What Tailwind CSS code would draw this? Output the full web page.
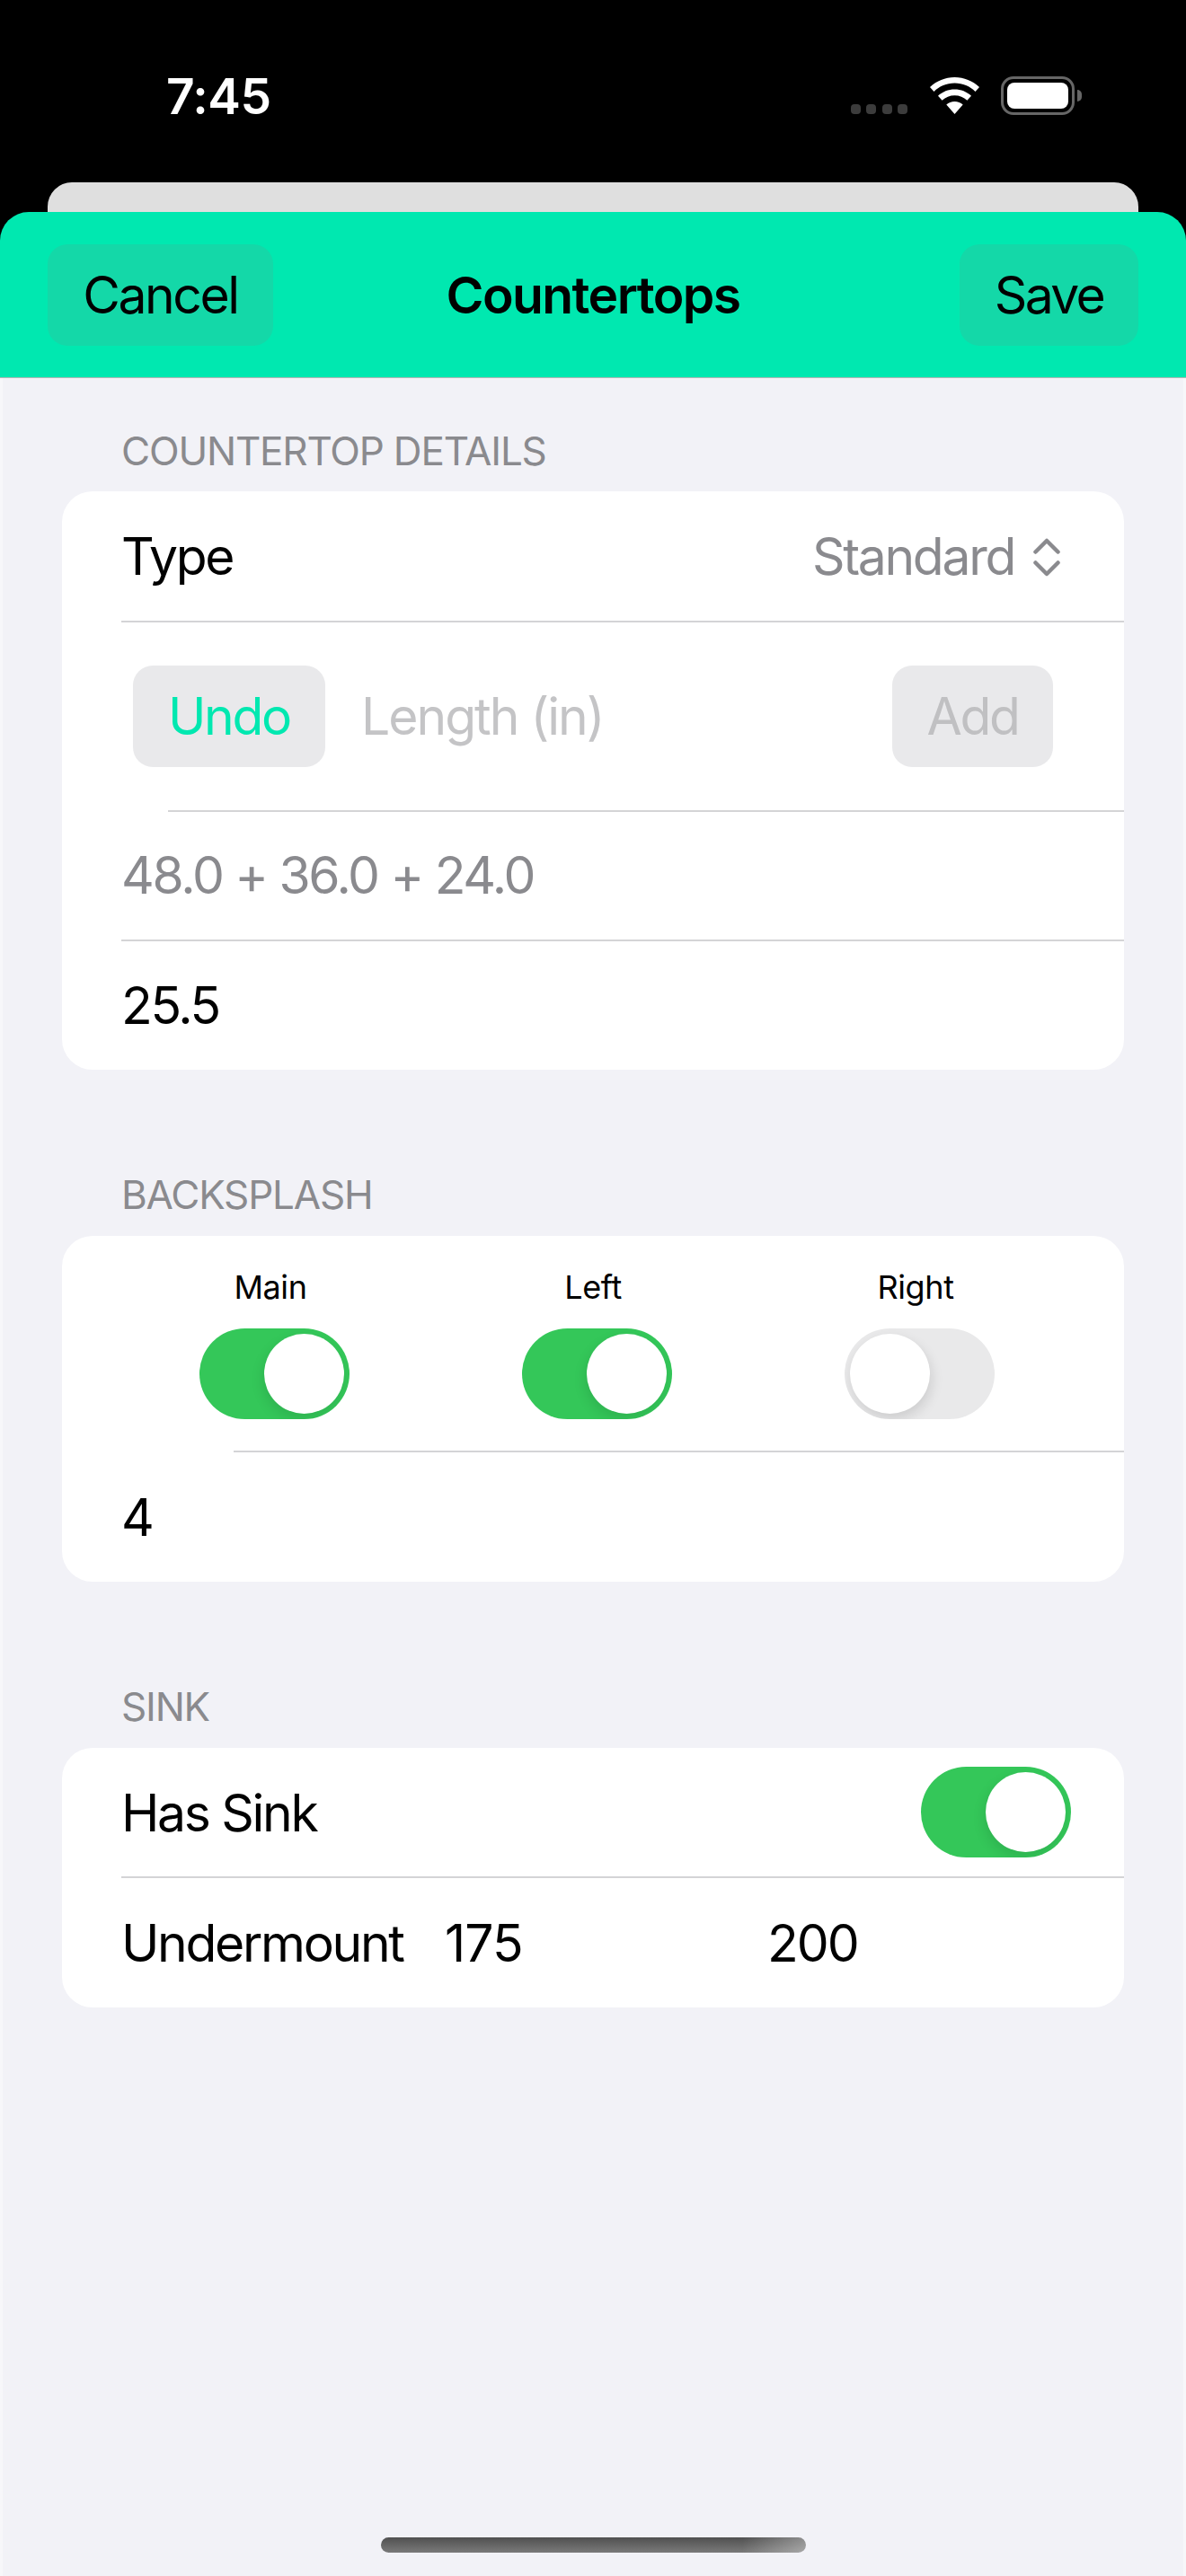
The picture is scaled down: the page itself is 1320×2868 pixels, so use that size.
<!DOCTYPE html>
<html lang="en">
<head>
    <meta charset="UTF-8" />
    <meta name="viewport" content="width=device-width, initial-scale=1.0" />
    <title>Countertops</title>
    <script src="https://cdn.jsdelivr.net/npm/@tailwindcss/browser@4"></script>
</head>
<body class="bg-black font-['Inter','Liberation_Sans',sans-serif] text-black">
<div class="relative w-[1320px] h-[2868px] overflow-hidden bg-black flex flex-col">

    <!-- status bar -->
    <div class="h-[203px] shrink-0 flex items-start text-white">
        <div class="ml-[185px] mt-[77px] text-[55px] leading-[60px] font-semibold tracking-[-0.5px]">7:45</div>
        <div class="ml-auto mr-[116px] mt-[85px] flex items-start">
            <div class="flex gap-[6.5px] mt-[31px]">
                <span class="w-[11px] h-[11px] rounded-[4px] bg-[#3c3c3c]"></span>
                <span class="w-[11px] h-[11px] rounded-[4px] bg-[#3c3c3c]"></span>
                <span class="w-[11px] h-[11px] rounded-[4px] bg-[#3c3c3c]"></span>
                <span class="w-[11px] h-[11px] rounded-[4px] bg-[#3c3c3c]"></span>
            </div>
            <svg class="ml-[25px] mt-[1px]" width="55" height="41" viewBox="0 0 55 41" fill="#fff">
                <path d="M27.500 0C17 0 7.500 4 0 11l4.500 5C10.500 10 18.500 6.500 27.500 6.500S44.500 10 50.500 16L55 11C47.500 4 38 0 27.500 0Z"/>
                <path d="M27.500 13.500C20.500 13.500 14 16 9 20.800l4.600 5C17.300 22.300 22.200 20.300 27.500 20.300s10.200 2 13.900 5.500l4.600-5C41 16 34.500 13.500 27.500 13.500Z"/>
                <path d="M27.500 27C24 27 20.800 28.200 18.300 30.500L27.500 41l9.200-10.500C34.200 28.200 31 27 27.500 27Z"/>
            </svg>
            <div class="ml-[24px] w-[82px] h-[43px] rounded-[14px] border-[3px] border-[#666] p-[4px]">
                <div class="w-full h-full rounded-[8px] bg-white"></div>
            </div>
            <div class="ml-[3px] mt-[15px] w-[5px] h-[13px] rounded-r-[5px] bg-[#666]"></div>
        </div>
    </div>

    <!-- sheet behind -->
    <div class="mx-[53px] h-[33px] shrink-0 rounded-t-[27px] bg-[#dfdfdf]"></div>

    <!-- nav bar -->
    <div class="h-[185px] shrink-0 rounded-t-[32px] bg-[#00e8b0] border-b-[1px] border-[#b5b5b5] px-[53px] pt-[36px] grid grid-cols-[251px_1fr_251px] items-start text-[57px]">
        <div class="h-[113px] rounded-[22px] bg-[#14d8a8] flex items-center justify-center tracking-[-2.4px]">Cancel</div>
        <div class="h-[113px] flex items-center justify-center font-semibold tracking-[-1.6px]">Countertops</div>
        <div class="w-[199px] justify-self-end h-[113px] rounded-[22px] bg-[#14d8a8] flex items-center justify-center tracking-[-2.600px]">Save</div>
    </div>

    <!-- content -->
    <div class="flex-1 bg-[#f2f2f7] border-x-[3px] border-[#f7f7fa] px-[66px]">

        <div class="mt-[57px] pl-[66px] h-[48px] flex items-center text-[44px] tracking-[-1.2px] text-[#8a8a8e]">COUNTERTOP DETAILS</div>
        <div class="mt-[21px] rounded-[34px] bg-white overflow-hidden text-[57px] tracking-[-2.3px]">
            <div class="h-[144px] pl-[66px] pr-[71px] pt-[2px] flex items-center justify-between">
                <span>Type</span>
                <span class="flex items-center text-[#8a8a8e]">Standard
                    <svg class="ml-[21px]" width="30" height="43" viewBox="0 0 30 43" fill="none" stroke="#8a8a8e" stroke-width="4.500" stroke-linecap="round" stroke-linejoin="round"><path d="M2.500 15.500 15 3l12.500 12.500"/><path d="M2.500 27.500 15 40l12.500-12.500"/></svg>
                </span>
            </div>
            <div class="h-[2px] ml-[66px] bg-[#d4d4d6]"></div>
            <div class="h-[209px] pl-[79px] pr-[79px] flex items-center">
                <div class="w-[214px] h-[113px] rounded-[22px] bg-[#e9e9eb] flex items-center justify-center text-[#00e8b0]">Undo</div>
                <div class="ml-[40px] text-[#c4c4c6] tracking-[-2px]">Length (in)</div>
                <div class="ml-auto w-[179px] h-[113px] rounded-[22px] bg-[#e9e9eb] flex items-center justify-center text-[#c0c0c2]">Add</div>
            </div>
            <div class="h-[2px] ml-[118px] bg-[#d4d4d6]"></div>
            <div class="h-[142px] pl-[66px] flex items-center text-[#8a8a8e]">48.0 + 36.0 + 24.0</div>
            <div class="h-[2px] ml-[66px] bg-[#d4d4d6]"></div>
            <div class="h-[143px] pl-[66px] flex items-center">25.5</div>
        </div>

        <div class="mt-[115px] pl-[66px] h-[48px] flex items-center text-[44px] tracking-[-1.2px] text-[#8a8a8e]">BACKSPLASH</div>
        <div class="mt-[22px] rounded-[34px] bg-white overflow-hidden">
            <div class="h-[239px] grid grid-cols-[360px_358px_360px] pl-[52px] pt-[35px]">
                <div class="flex flex-col items-center">
                    <span class="text-[36px] leading-[44px] tracking-[-0.4px]">Main</span>
                    <div class="mt-[24px] ml-[8px] w-[167px] h-[101px] rounded-full bg-[#34c759] overflow-hidden flex items-center justify-end pr-[6px]">
                        <span class="w-[89px] h-[89px] rounded-full bg-white shadow-[-2px_6px_14px_rgba(0,0,0,0.1)]"></span>
                    </div>
                </div>
                <div class="flex flex-col items-center">
                    <span class="text-[36px] leading-[44px] tracking-[-0.4px]">Left</span>
                    <div class="mt-[24px] ml-[8px] w-[167px] h-[101px] rounded-full bg-[#34c759] overflow-hidden flex items-center justify-end pr-[6px]">
                        <span class="w-[89px] h-[89px] rounded-full bg-white shadow-[-2px_6px_14px_rgba(0,0,0,0.1)]"></span>
                    </div>
                </div>
                <div class="flex flex-col items-center">
                    <span class="text-[36px] leading-[44px] tracking-[-0.4px]">Right</span>
                    <div class="mt-[24px] ml-[8px] w-[167px] h-[101px] rounded-full bg-[#e9e9ea] overflow-hidden flex items-center justify-start pl-[6px]">
                        <span class="w-[89px] h-[89px] rounded-full bg-white shadow-[2px_6px_14px_rgba(0,0,0,0.12)]"></span>
                    </div>
                </div>
            </div>
            <div class="h-[2px] ml-[191px] bg-[#d4d4d6]"></div>
            <div class="h-[144px] pl-[66px] pt-[2px] flex items-center text-[57px] tracking-[-2px]">4</div>
        </div>

        <div class="mt-[115px] pl-[66px] h-[48px] flex items-center text-[44px] tracking-[-1.2px] text-[#8a8a8e]">SINK</div>
        <div class="mt-[22px] rounded-[34px] bg-white overflow-hidden text-[57px] tracking-[-2.3px]">
            <div class="h-[143px] pl-[66px] pr-[59px] flex items-center justify-between">
                <span class="pt-[2px]">Has Sink</span>
                <div class="w-[167px] h-[101px] rounded-full bg-[#34c759] overflow-hidden flex items-center justify-end pr-[6px]">
                    <span class="w-[89px] h-[89px] rounded-full bg-white shadow-[-2px_6px_14px_rgba(0,0,0,0.1)]"></span>
                </div>
            </div>
            <div class="h-[2px] ml-[66px] bg-[#d4d4d6]"></div>
            <div class="h-[144px] pl-[66px] pt-[2px] grid grid-cols-[360px_359px_1fr] items-center">
                <span>Undermount</span>
                <span class="tracking-[-1px]">175</span>
                <span class="tracking-[-2px]">200</span>
            </div>
        </div>
    </div>

    <!-- home indicator -->
    <div class="absolute left-[424px] top-[2825px] w-[473px] h-[17px] rounded-full bg-[linear-gradient(to_right,transparent_85%,rgba(255,255,255,0.35)),linear-gradient(to_bottom,#505050,#7a7a7a)]"></div>
</div>
</body>
</html>
